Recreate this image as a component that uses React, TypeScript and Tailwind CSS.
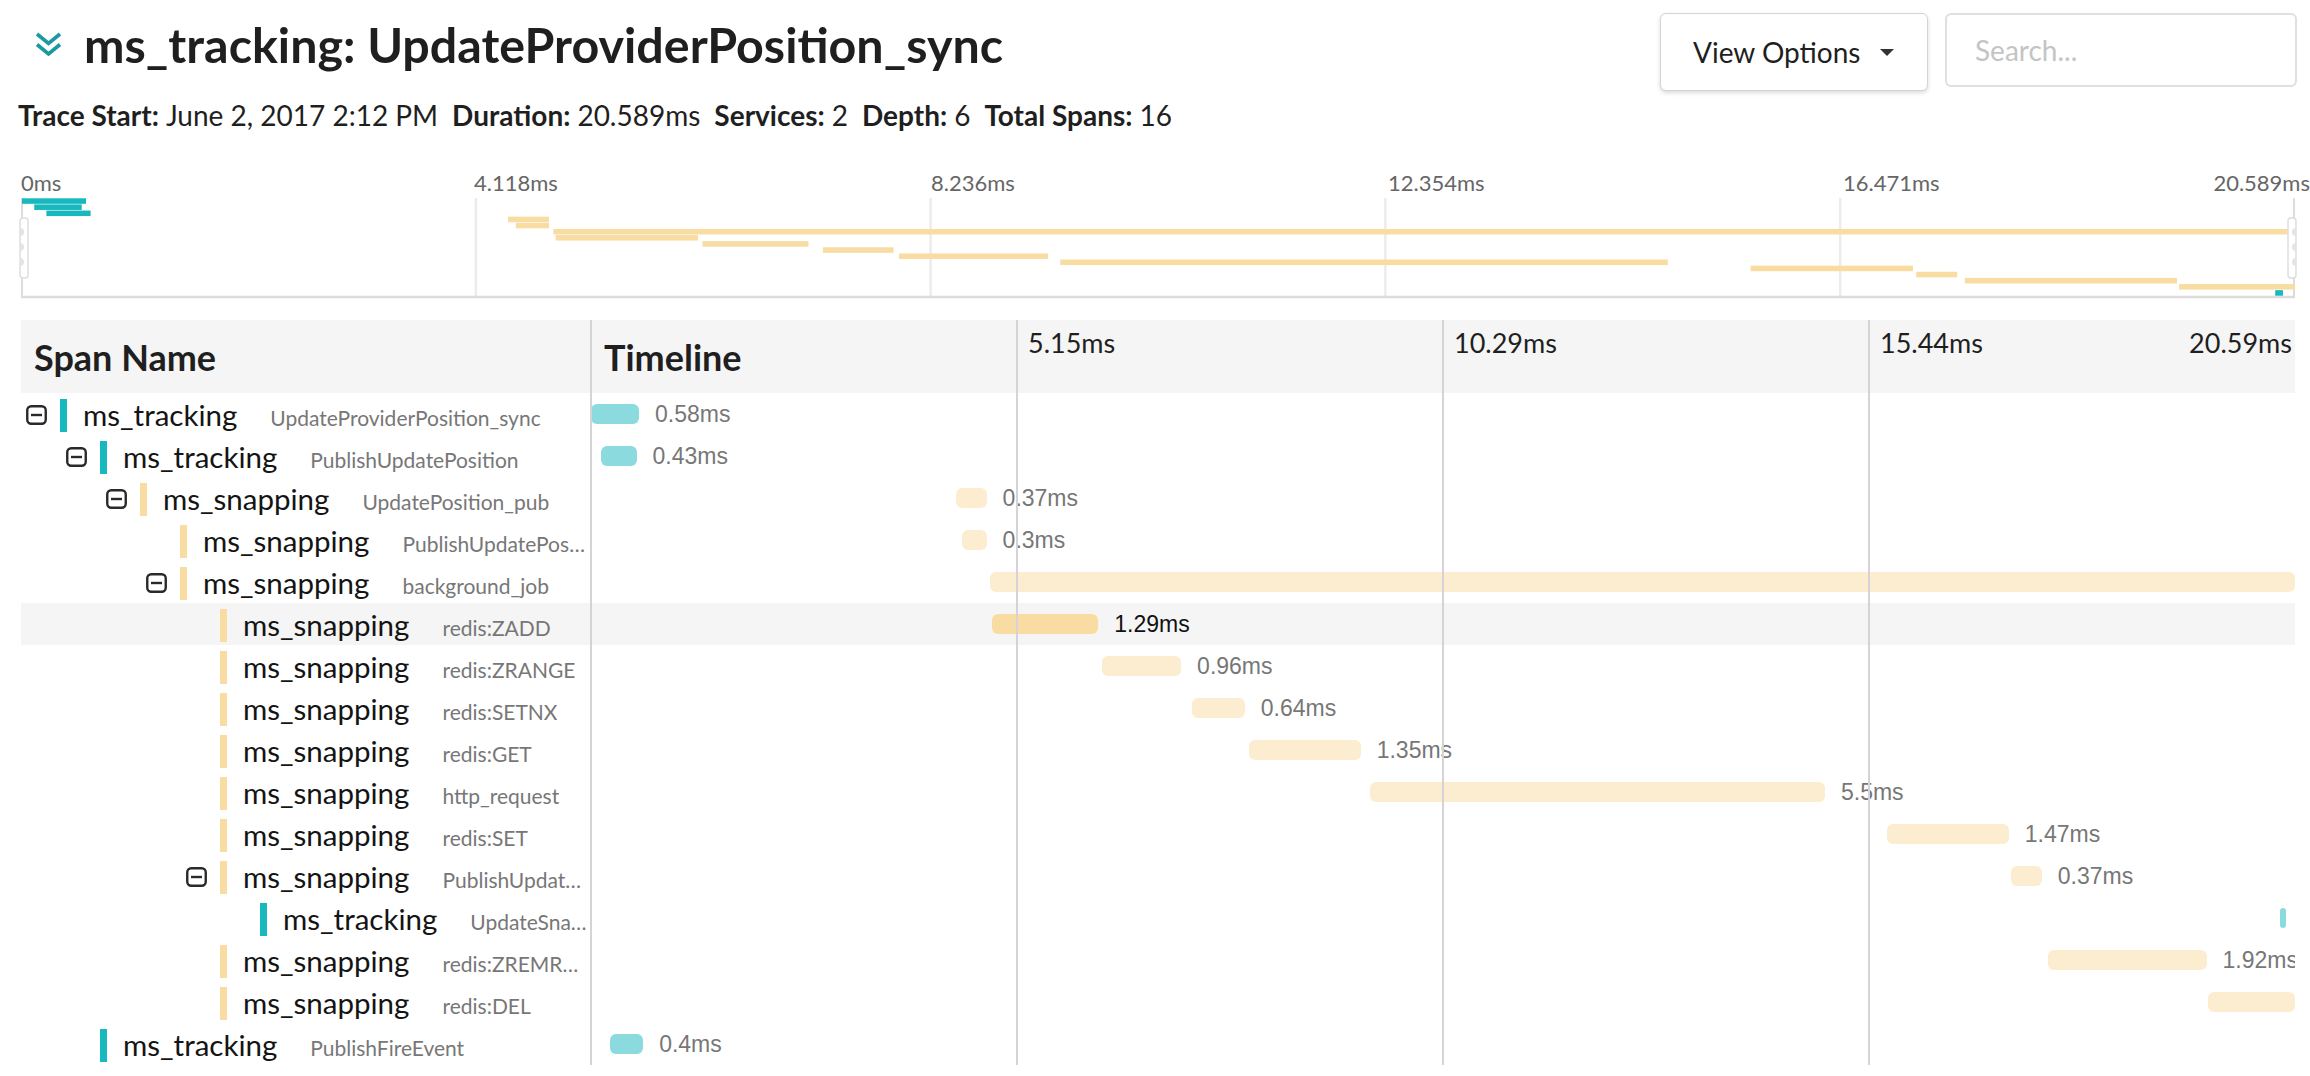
import React from 'react';

type Span = {
  svc: 'ms_tracking' | 'ms_snapping';
  op: string;
  depth: number;
  toggle?: boolean;
  start: number;
  dur: number;
  label?: string;
  hl?: boolean;
};

const TOTAL = 20.589;
const TL_W = 1704;
const MM_W = 2274;

const spans: Span[] = [
  { svc: 'ms_tracking', op: 'UpdateProviderPosition_sync', depth: 0, toggle: true, start: 0, dur: 0.58, label: '0.58ms' },
  { svc: 'ms_tracking', op: 'PublishUpdatePosition', depth: 1, toggle: true, start: 0.12, dur: 0.43, label: '0.43ms' },
  { svc: 'ms_snapping', op: 'UpdatePosition_pub', depth: 2, toggle: true, start: 4.41, dur: 0.37, label: '0.37ms' },
  { svc: 'ms_snapping', op: 'PublishUpdatePosition_sub', depth: 3, start: 4.48, dur: 0.3, label: '0.3ms' },
  { svc: 'ms_snapping', op: 'background_job', depth: 3, toggle: true, start: 4.82, dur: 15.77 },
  { svc: 'ms_snapping', op: 'redis:ZADD', depth: 4, start: 4.84, dur: 1.29, label: '1.29ms', hl: true },
  { svc: 'ms_snapping', op: 'redis:ZRANGE', depth: 4, start: 6.17, dur: 0.96, label: '0.96ms' },
  { svc: 'ms_snapping', op: 'redis:SETNX', depth: 4, start: 7.26, dur: 0.64, label: '0.64ms' },
  { svc: 'ms_snapping', op: 'redis:GET', depth: 4, start: 7.95, dur: 1.35, label: '1.35ms' },
  { svc: 'ms_snapping', op: 'http_request', depth: 4, start: 9.41, dur: 5.5, label: '5.5ms' },
  { svc: 'ms_snapping', op: 'redis:SET', depth: 4, start: 15.66, dur: 1.47, label: '1.47ms' },
  { svc: 'ms_snapping', op: 'PublishUpdateSnapshot', depth: 4, toggle: true, start: 17.16, dur: 0.37, label: '0.37ms' },
  { svc: 'ms_tracking', op: 'UpdateSnapshotCache', depth: 5, start: 20.41, dur: 0.07 },
  { svc: 'ms_snapping', op: 'redis:ZREMRANGEBYSCORE', depth: 4, start: 17.6, dur: 1.92, label: '1.92ms' },
  { svc: 'ms_snapping', op: 'redis:DEL', depth: 4, start: 19.54, dur: 1.05 },
  { svc: 'ms_tracking', op: 'PublishFireEvent', depth: 1, start: 0.23, dur: 0.4, label: '0.4ms' },
];

const indent: Record<number, string> = {
  0: 'pl-[5px]',
  1: 'pl-[45px]',
  2: 'pl-[85px]',
  3: 'pl-[125px]',
  4: 'pl-[165px]',
  5: 'pl-[205px]',
};

const TEAL = '#17b8be';
const YELLOW = '#f8dca1';

function Chevrons() {
  return (
    <svg width="27" height="25" viewBox="0 0 27 25" fill="none">
      <polyline points="2,2 13.5,11.5 25,2" stroke="#1a9aa0" strokeWidth="3.6" />
      <polyline points="2,12.5 13.5,22 25,12.5" stroke="#1a9aa0" strokeWidth="3.6" />
    </svg>
  );
}

function Toggle() {
  return (
    <svg width="21" height="20" viewBox="0 0 21 20" fill="none">
      <rect x="1.25" y="1.25" width="18.5" height="17.5" rx="4" stroke="#2a2a2a" strokeWidth="2.4" />
      <line x1="5" y1="10" x2="16" y2="10" stroke="#2a2a2a" strokeWidth="2.4" />
    </svg>
  );
}

function Minimap() {
  const sorted = [...spans].sort((a, b) => a.start - b.start);
  const rowH = 98 / 16;
  const sc = MM_W / TOTAL;
  const handleDots = [34, 49, 64];
  return (
    <div className="flex flex-col">
      <div className="relative h-[30px] text-[22px] leading-[30px] text-[#666]">
        <span className="absolute left-0 top-0">0ms</span>
        <span className="absolute left-[453px] top-0">4.118ms</span>
        <span className="absolute left-[910px] top-0">8.236ms</span>
        <span className="absolute left-[1367px] top-0">12.354ms</span>
        <span className="absolute left-[1822px] top-0">16.471ms</span>
        <span className="absolute right-0 top-0">20.589ms</span>
      </div>
      <svg width={MM_W} height="100" viewBox={`0 0 ${MM_W} 100`} className="overflow-visible">
        {[1, 2, 3, 4].map((k) => (
          <line key={k} x1={(MM_W * k) / 5} y1="0" x2={(MM_W * k) / 5} y2="98" stroke="#ececec" strokeWidth="2.5" />
        ))}
        <line x1="1" y1="0" x2="1" y2="99" stroke="#dcdcdc" strokeWidth="2" />
        <line x1={MM_W - 1} y1="0" x2={MM_W - 1} y2="99" stroke="#dcdcdc" strokeWidth="2" />
        <line x1="0" y1="99" x2={MM_W} y2="99" stroke="#dcdcdc" strokeWidth="2.5" />
        {sorted.map((s, i) => (
          <rect
            key={i}
            x={Math.max(1, s.start * sc)}
            y={i * rowH + 0.3}
            width={Math.max(6, s.dur * sc)}
            height={rowH - 0.6}
            fill={s.svc === 'ms_tracking' ? TEAL : YELLOW}
          />
        ))}
        <rect x="-1" y="20" width="8" height="60" rx="3" fill="white" stroke="#dedede" strokeWidth="1.5" />
        {handleDots.map((y) => (
          <path key={y} d={`M -1 ${y - 4} A 4 4 0 0 1 -1 ${y + 4} Z`} fill="#e4e4e4" />
        ))}
        <rect x={MM_W - 7} y="20" width="8" height="60" rx="3" fill="white" stroke="#dedede" strokeWidth="1.5" />
        {handleDots.map((y) => (
          <path key={'r' + y} d={`M ${MM_W + 1} ${y - 4} A 4 4 0 0 0 ${MM_W + 1} ${y + 4} Z`} fill="#e4e4e4" />
        ))}
      </svg>
    </div>
  );
}

function TraceTable() {
  const sc = TL_W / TOTAL;
  return (
    <div className="relative w-[2274px]">
      <div className="grid grid-cols-[570px_1704px] h-[73px] bg-[#f5f5f5]">
        <div className="flex items-center pl-[13px] text-[36px] font-bold text-[#1f1f1f]">Span Name</div>
        <div className="relative flex items-center pl-[13px] text-[36px] font-bold text-[#1f1f1f]">
          Timeline
          <span className="absolute left-[437px] top-[3px] text-[27px] font-normal text-[#1f1f1f]">5.15ms</span>
          <span className="absolute left-[863px] top-[3px] text-[27px] font-normal text-[#1f1f1f]">10.29ms</span>
          <span className="absolute left-[1289px] top-[3px] text-[27px] font-normal text-[#1f1f1f]">15.44ms</span>
          <span className="absolute right-[3px] top-[3px] text-[27px] font-normal text-[#1f1f1f]">20.59ms</span>
        </div>
      </div>
      {spans.map((s, i) => {
        const left = s.start * sc;
        const width = Math.max(5, s.dur * sc);
        const isT = s.svc === 'ms_tracking';
        return (
          <div key={i} className={`grid grid-cols-[570px_1704px] h-[42px] ${s.hl ? 'bg-[#f5f5f5]' : ''}`}>
            <div className={`flex items-center min-w-0 pr-[2px] ${indent[s.depth]}`}>
              <div className="w-[34px] shrink-0 flex items-center">{s.toggle ? <Toggle /> : null}</div>
              <div className={`w-[7px] h-[33px] shrink-0 ${isT ? 'bg-[#17b8be]' : 'bg-[#f8dca1]'}`} />
              <div className="flex items-baseline min-w-0 ml-[16px]">
                <span className="shrink-0 text-[29.5px] text-[#141414] whitespace-nowrap">{s.svc}</span>
                <span className="ml-[33px] min-w-0 truncate text-[21px] text-[#777]">{s.op}</span>
              </div>
            </div>
            <div className="relative overflow-hidden">
              <div
                className={`absolute top-[11px] h-[20px] rounded-[6px] ${
                  isT ? 'bg-[#8bdbde]' : s.hl ? 'bg-[#f8dca1]' : 'bg-[#fcedd0]'
                }`}
                style={{ left, width }}
              />
              {s.label ? (
                <span
                  className={`absolute top-0 h-[42px] flex items-center font-['Liberation_Sans',sans-serif] text-[23px] whitespace-nowrap ${
                    s.hl ? 'text-[#111]' : 'text-[#777]'
                  }`}
                  style={{ left: left + width + 16 }}
                >
                  {s.label}
                </span>
              ) : null}
            </div>
          </div>
        );
      })}
      <div className="absolute top-0 bottom-0 left-[569px] w-[2px] bg-[#d4d4d4]" />
      <div className="absolute top-0 bottom-0 left-[995px] w-[2px] bg-[#d4d4d4]" />
      <div className="absolute top-0 bottom-0 left-[1421px] w-[2px] bg-[#d4d4d4]" />
      <div className="absolute top-0 bottom-0 left-[1847px] w-[2px] bg-[#d4d4d4]" />
    </div>
  );
}

export default function App() {
  return (
    <div className="w-[2310px] min-h-[1076px] bg-white font-['Lato',sans-serif] text-[#1f1f1f]">
      <div className="flex items-start justify-between pl-[35px] pr-[13px] pt-[13px] h-[89px]">
        <div className="flex items-center h-[62px]">
          <Chevrons />
          <h1 className="ml-[22px] text-[48.4px] font-bold leading-none text-[#1f1f1f]">
            ms_tracking: UpdateProviderPosition_sync
          </h1>
        </div>
        <div className="flex gap-[17px]">
          <button className="flex items-center w-[268px] h-[78px] pl-[32px] rounded-[6px] border border-[#d4d4d5] bg-white shadow-[0_2px_4px_rgba(0,0,0,0.15)] text-[28px] text-[#1f1f1f]">
            View Options
            <span className="ml-[20px] w-0 h-0 border-l-[7px] border-r-[7px] border-t-[7px] border-l-transparent border-r-transparent border-t-[#333]" />
          </button>
          <div className="flex items-center w-[352px] h-[74px] pl-[28px] rounded-[6px] border-2 border-[#e0e0e0] bg-white text-[28px] text-[#c4c4c4]">
            Search...
          </div>
        </div>
      </div>
      <div className="flex items-center h-[36px] mt-[8px] pl-[18px] text-[28px] text-[#1f1f1f] whitespace-nowrap">
        <span className="font-bold">Trace Start:</span>
        <span className="ml-[7px]">June 2, 2017 2:12 PM</span>
        <span className="ml-[14px] font-bold">Duration:</span>
        <span className="ml-[7px]">20.589ms</span>
        <span className="ml-[14px] font-bold">Services:</span>
        <span className="ml-[7px]">2</span>
        <span className="ml-[14px] font-bold">Depth:</span>
        <span className="ml-[7px]">6</span>
        <span className="ml-[14px] font-bold">Total Spans:</span>
        <span className="ml-[7px]">16</span>
      </div>
      <div className="pl-[21px] mt-[35px]">
        <Minimap />
      </div>
      <div className="pl-[21px] mt-[22px]">
        <TraceTable />
      </div>
    </div>
  );
}
